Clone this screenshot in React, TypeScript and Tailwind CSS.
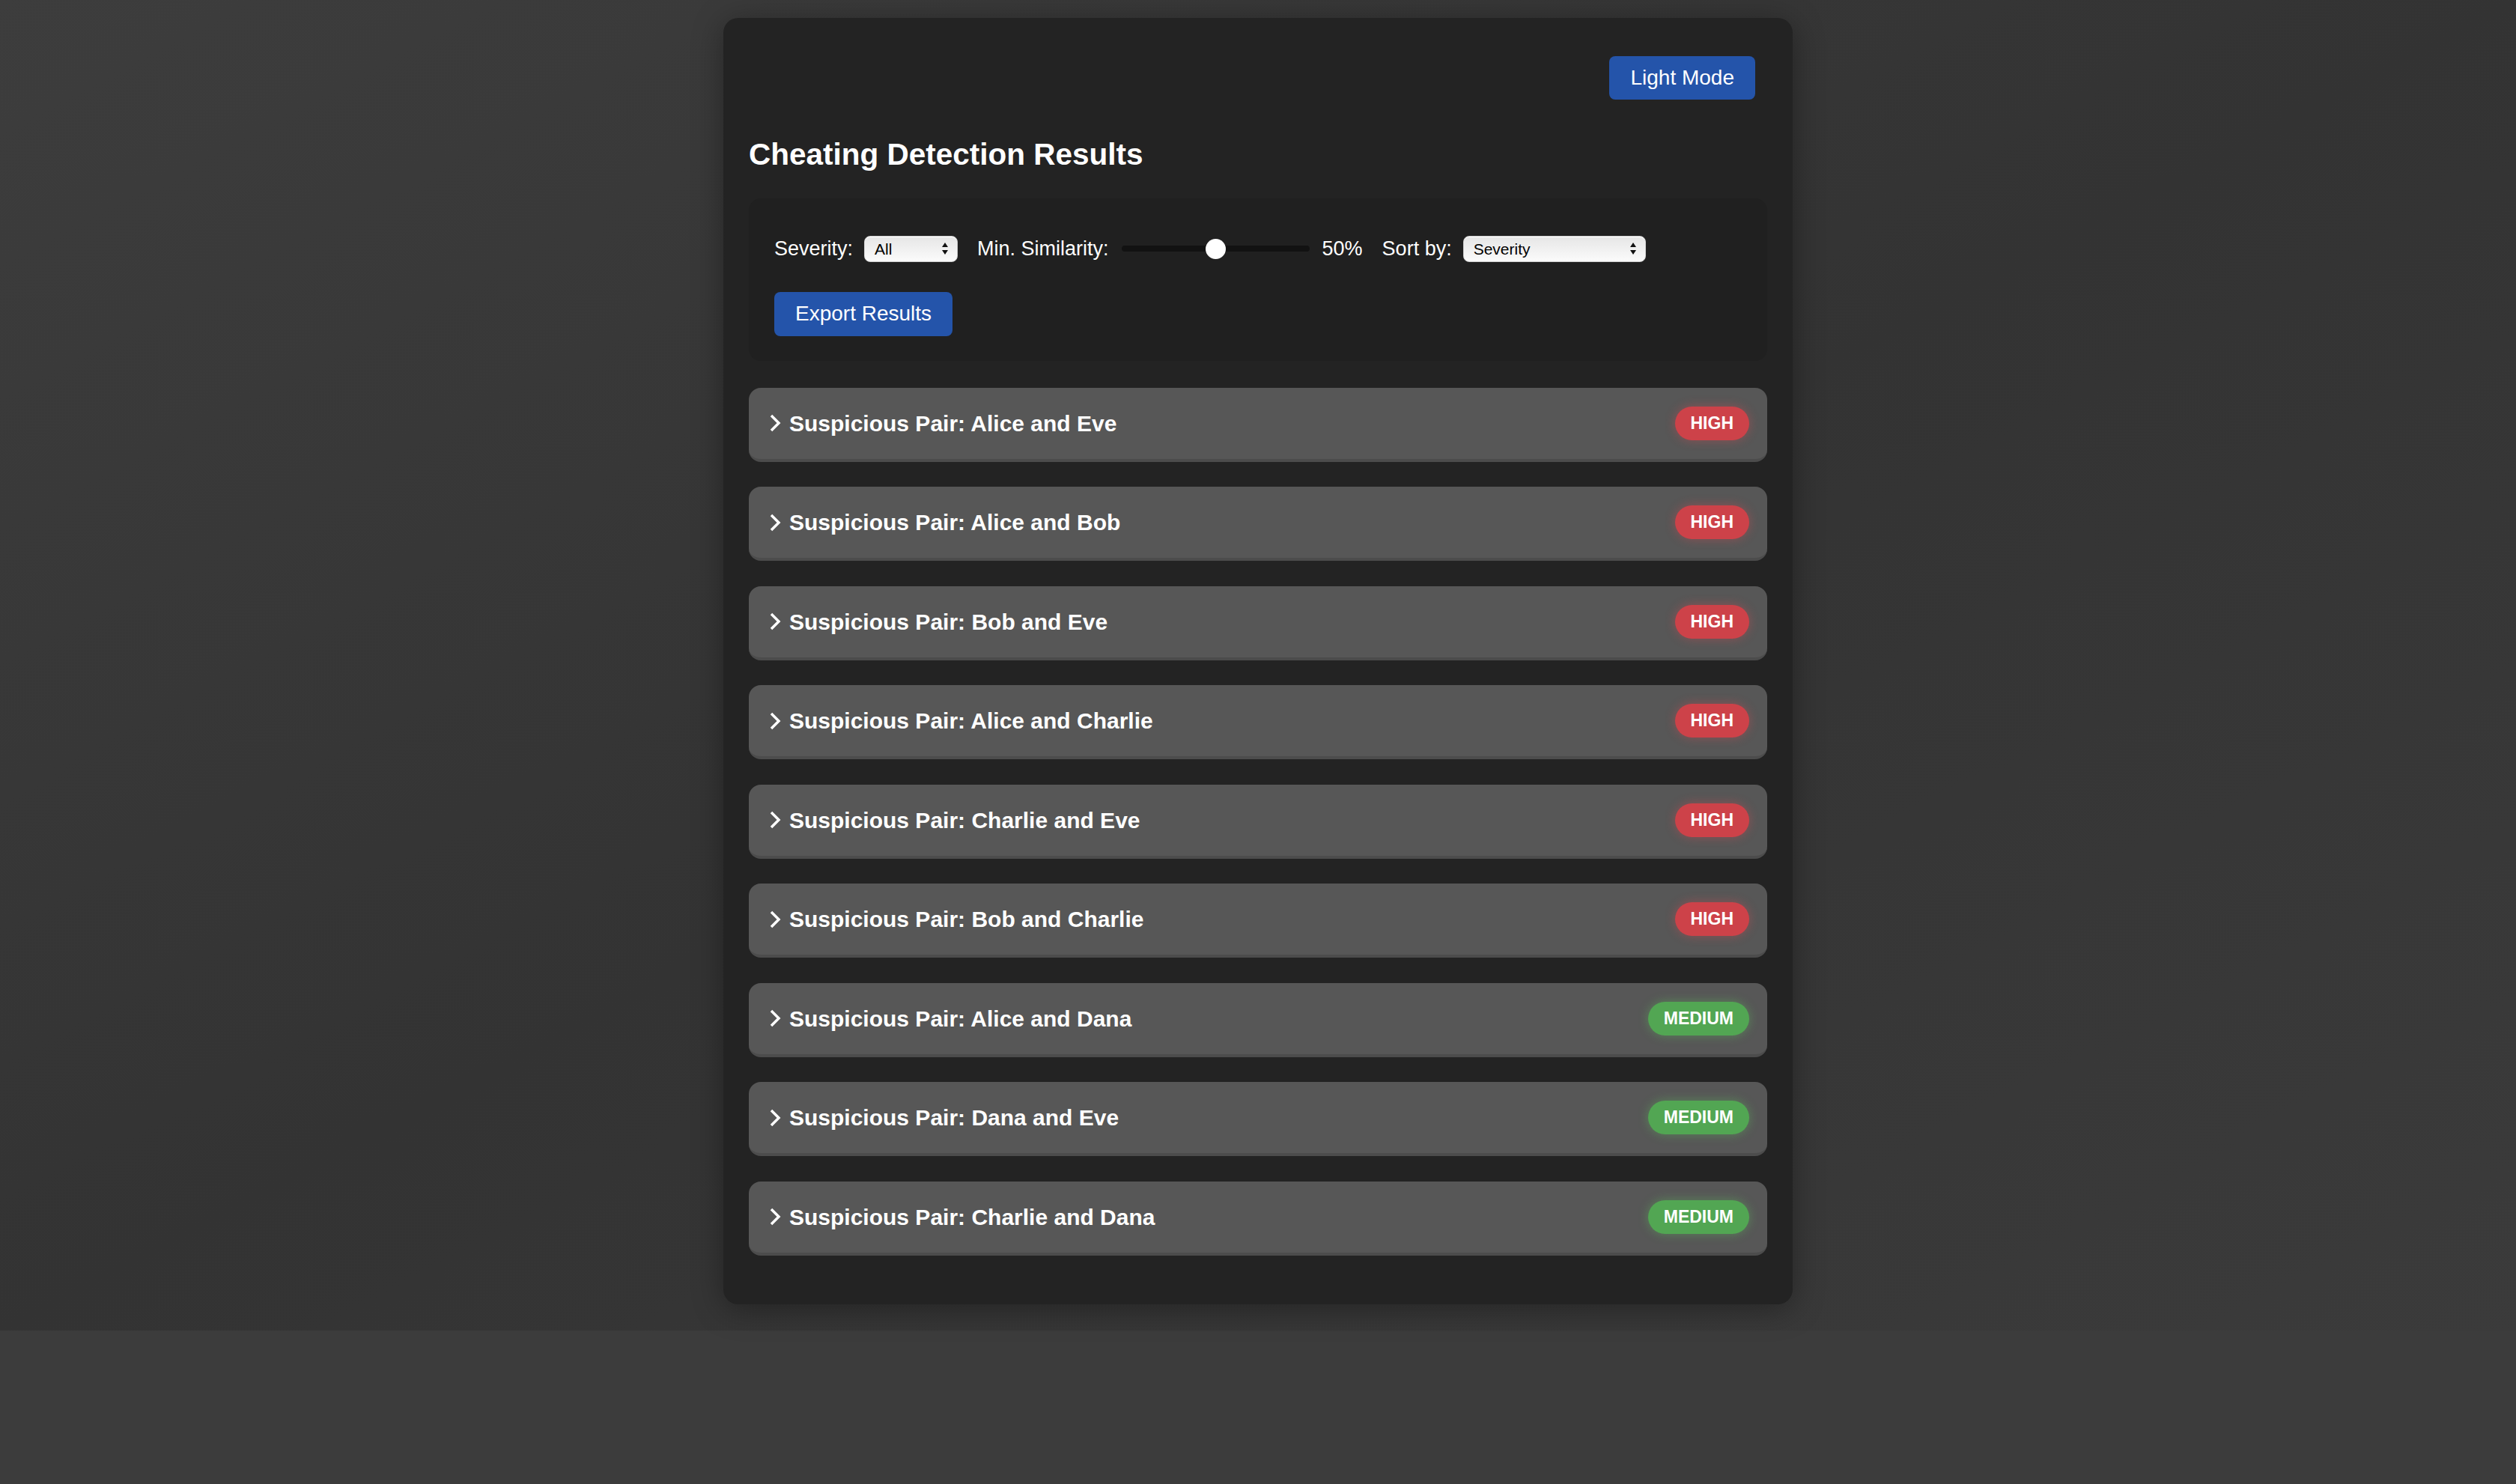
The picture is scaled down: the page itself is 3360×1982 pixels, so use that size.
import React from 'react';

type Severity = 'HIGH' | 'MEDIUM';

const pairs: { names: string; severity: Severity }[] = [
  { names: 'Alice and Eve', severity: 'HIGH' },
  { names: 'Alice and Bob', severity: 'HIGH' },
  { names: 'Bob and Eve', severity: 'HIGH' },
  { names: 'Alice and Charlie', severity: 'HIGH' },
  { names: 'Charlie and Eve', severity: 'HIGH' },
  { names: 'Bob and Charlie', severity: 'HIGH' },
  { names: 'Alice and Dana', severity: 'MEDIUM' },
  { names: 'Dana and Eve', severity: 'MEDIUM' },
  { names: 'Charlie and Dana', severity: 'MEDIUM' },
];

const SelectArrows = () => (
  <svg width="10" height="18" viewBox="0 0 10 18" className="shrink-0">
    <path d="M5 1 L9 7 L1 7 Z" fill="#111" />
    <path d="M5 17 L9 11 L1 11 Z" fill="#111" />
  </svg>
);

const FakeSelect = ({ value, width }: { value: string; width: string }) => (
  <div
    className={`${width} h-[35px] flex items-center justify-between pl-[13px] pr-[11px] rounded-[8px] border border-[#cfcfcf] bg-gradient-to-b from-[#e6e6e6] to-[#fbfbfb] text-[21px] text-black shadow-[inset_0_1px_0_#fff]`}
  >
    <span>{value}</span>
    <SelectArrows />
  </div>
);

const Chevron = () => (
  <svg width="16" height="24" viewBox="0 0 16 24" className="shrink-0">
    <polyline points="3,2 13,12 3,22" fill="none" stroke="#fff" strokeWidth="3.5" strokeLinejoin="miter" />
  </svg>
);

const Badge = ({ severity }: { severity: Severity }) => {
  const cls =
    severity === 'HIGH'
      ? 'bg-[#cd4249] shadow-[0_0_14px_rgba(215,70,80,0.45)]'
      : 'bg-[#52a653] shadow-[0_0_14px_rgba(90,190,90,0.45)]';
  return (
    <span className={`${cls} h-[45px] px-[21px] rounded-full flex items-center text-[23px] font-bold text-white`}>
      {severity}
    </span>
  );
};

export default function App() {
  return (
    <div className="min-h-screen bg-[#3c3c3c] font-['Liberation_Sans',Arial,sans-serif]">
      <div className="bg-gradient-to-br from-[#3d3d3d] via-[#333333] to-[#3b3b3b] pt-[24px] pb-[35px]">
        <div className="w-[1428px] mx-auto rounded-[20px] bg-[#232323] px-[34px] pt-[34px] pb-[65px] shadow-[0_6px_40px_rgba(0,0,0,0.35)]">
          {/* Theme toggle */}
          <div className="flex justify-end pt-[17px] pr-[16px]">
            <button className="h-[58px] px-[28px] rounded-[8px] bg-[#2454aa] text-white text-[28px]">
              Light Mode
            </button>
          </div>

          <h2 className="mt-[50px] text-[40.5px] leading-[46px] font-bold text-white">
            Cheating Detection Results
          </h2>

          {/* Filters */}
          <div className="mt-[36px] rounded-[16px] bg-[#202020] px-[34px] pt-[47px] pb-[33px]">
            <div className="flex items-center text-[27px] text-white">
              <span>Severity:</span>
              <div className="ml-[15px]">
                <FakeSelect value="All" width="w-[125px]" />
              </div>
              <span className="ml-[26px]">Min. Similarity:</span>
              <div className="ml-[17px] w-[251px] h-[27px] flex items-center">
                <div className="flex-1 h-[8px] rounded-full bg-[#121212] flex items-center">
                  <div className="w-[112px]" />
                  <div className="w-[27px] h-[27px] rounded-full bg-white" />
                </div>
              </div>
              <span className="ml-[17px]">50%</span>
              <span className="ml-[26px]">Sort by:</span>
              <div className="ml-[15px]">
                <FakeSelect value="Severity" width="w-[244px]" />
              </div>
            </div>
            <button className="mt-[37px] h-[59px] px-[28px] rounded-[8px] bg-[#2454aa] text-white text-[28px]">
              Export Results
            </button>
          </div>

          {/* Results */}
          <div className="mt-[36px] flex flex-col gap-[33.5px]">
            {pairs.map((p) => (
              <div
                key={p.names}
                className="h-[99px] rounded-[16px] bg-[#575757] border-b-4 border-[#4c4c4c] flex items-center justify-between pl-[27px] pr-[24px]"
              >
                <div className="flex items-center gap-[11px] text-[30px] font-bold text-white">
                  <Chevron />
                  <span>Suspicious Pair: {p.names}</span>
                </div>
                <Badge severity={p.severity} />
              </div>
            ))}
          </div>
        </div>
      </div>
    </div>
  );
}
